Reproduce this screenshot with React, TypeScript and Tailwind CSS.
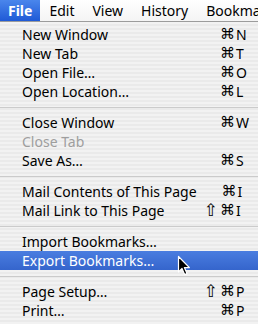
type Item =
  | { kind: "sep" }
  | {
      kind: "item";
      label: string;
      shift?: boolean;
      keyChar?: string;
      disabled?: boolean;
      active?: boolean;
    };

const items: Item[] = [
  { kind: "item", label: "New Window", keyChar: "N" },
  { kind: "item", label: "New Tab", keyChar: "T" },
  { kind: "item", label: "Open File…", keyChar: "O" },
  { kind: "item", label: "Open Location…", keyChar: "L" },
  { kind: "sep" },
  { kind: "item", label: "Close Window", keyChar: "W" },
  { kind: "item", label: "Close Tab", disabled: true },
  { kind: "item", label: "Save As…", keyChar: "S" },
  { kind: "sep" },
  { kind: "item", label: "Mail Contents of This Page", keyChar: "I" },
  { kind: "item", label: "Mail Link to This Page", shift: true, keyChar: "I" },
  { kind: "sep" },
  { kind: "item", label: "Import Bookmarks…" },
  { kind: "item", label: "Export Bookmarks…", active: true },
  { kind: "sep" },
  { kind: "item", label: "Page Setup…", shift: true, keyChar: "P" },
  { kind: "item", label: "Print…", keyChar: "P" },
];

const menus = ["File", "Edit", "View", "History", "Bookmarks"];

function Cursor() {
  return (
    <svg
      className="absolute left-[177px] top-[255px]"
      width="14"
      height="22"
      viewBox="0 0 14 22"
    >
      <path
        d="M1.5 1.5 L1.5 17 L5 13.5 L7.6 19.6 L10 18.6 L7.4 12.6 L12.4 12.6 Z"
        fill="#000"
        stroke="#fff"
        strokeWidth="1.2"
        strokeLinejoin="round"
      />
    </svg>
  );
}

export default function App() {
  return (
    <div className="relative h-[324px] w-[258px] overflow-hidden bg-[#ededed] font-['Noto_Sans','DejaVu_Sans',sans-serif] text-[14px] text-black">
      <div className="flex h-[22px] items-center border-b border-[#9c9c9c] bg-[linear-gradient(to_bottom,#ffffff,#f4f4f4)] whitespace-nowrap">
        {menus.map((m, i) => (
          <div
            key={m}
            className={
              i === 0
                ? "flex h-full items-center bg-[linear-gradient(to_bottom,#4a86ec,#1f5ad6)] px-[8px] font-bold text-white"
                : "flex h-full shrink-0 items-center px-[9px]"
            }
          >
            {m}
          </div>
        ))}
      </div>

      <div className="bg-[repeating-linear-gradient(to_bottom,#f2f2f2_0px,#f2f2f2_2px,#eaeaea_2px,#eaeaea_4px)] pt-[3px] pb-[4px]">
        {items.map((it, idx) =>
          it.kind === "sep" ? (
            <div key={idx} className="flex h-[12px] items-center">
              <div className="h-px w-full bg-[#cbcbcb]" />
            </div>
          ) : (
            <div
              key={idx}
              className={
                "flex h-[19px] items-center pl-[22px] leading-[19px] whitespace-nowrap " +
                (it.active
                  ? "bg-[linear-gradient(to_bottom,#4a7de0,#3565cc)] text-white"
                  : it.disabled
                    ? "text-[#9e9e9e]"
                    : "")
              }
            >
              <span className="flex-1">{it.label}</span>
              <span className="flex w-[44px] items-center justify-end gap-[2px] pr-[1px] font-['DejaVu_Sans',sans-serif]">
                {it.shift && <span className="text-[17px] leading-[19px]">⇧</span>}
                {it.keyChar && <span className="text-[15px] leading-[19px]">⌘</span>}
              </span>
              <span className="w-[22px]">{it.keyChar ?? ""}</span>
            </div>
          )
        )}
      </div>

      <Cursor />
    </div>
  );
}
